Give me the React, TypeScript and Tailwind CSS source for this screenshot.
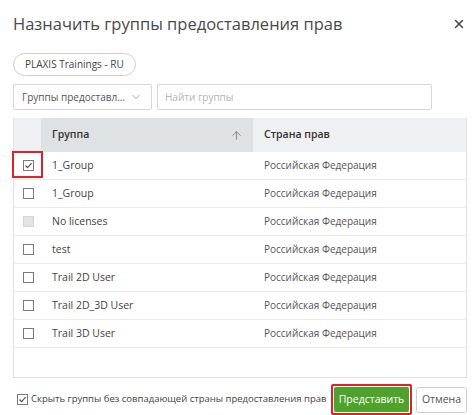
import { X, ChevronDown, ArrowUp } from "lucide-react";

const rows = [
  { name: "1_Group", country: "Российская Федерация", checked: true, disabled: false },
  { name: "1_Group", country: "Российская Федерация", checked: false, disabled: false },
  { name: "No licenses", country: "Российская Федерация", checked: false, disabled: true },
  { name: "test", country: "Российская Федерация", checked: false, disabled: false },
  { name: "Trail 2D User", country: "Российская Федерация", checked: false, disabled: false },
  { name: "Trail 2D_3D User", country: "Российская Федерация", checked: false, disabled: false },
  { name: "Trail 3D User", country: "Российская Федерация", checked: false, disabled: false },
];

function Box({ checked, disabled }: { checked?: boolean; disabled?: boolean }) {
  if (disabled) {
    return <span className="block w-[11px] h-[11px] border border-[#d4d4d4] bg-[#e4e4e4]" />;
  }
  return (
    <span className="flex items-center justify-center w-[11px] h-[11px] border border-[#7a7a7a] bg-white">
      {checked && (
        <svg width="9" height="9" viewBox="0 0 9 9">
          <path d="M1.5 4.5 L3.6 6.6 L7.6 2.2" fill="none" stroke="#555" strokeWidth="1.2" />
        </svg>
      )}
    </span>
  );
}

export default function App() {
  return (
    <div className="relative w-[474px] h-[415px] bg-white text-[#444] overflow-hidden whitespace-nowrap" style={{ fontFamily: "'Open Sans', 'Noto Sans', sans-serif" }}>
      <div className="flex items-center justify-between pl-[13px] pr-[8px] pt-[8px] h-[40px]">
        <h1 className="text-[16.5px] text-[#4a4a4a] leading-none">Назначить группы предоставления прав</h1>
        <X className="w-[14px] h-[14px] text-[#444]" strokeWidth={2.5} />
      </div>
      <div className="px-[13px] mt-[10px]">
        <span className="inline-flex items-center h-[23px] px-[11px] border border-[#cfcfcf] rounded-full text-[10px] text-[#444]">
          PLAXIS Trainings - RU
        </span>
      </div>
      <div className="flex gap-[5px] px-[13px] mt-[8px]">
        <div className="flex items-center justify-between w-[139px] h-[26px] border border-[#d6d6d6] rounded-[2px] pl-[8px] pr-[9px] text-[10px] text-[#555]">
          <span>Группы предоставл...</span>
          <ChevronDown className="w-[12px] h-[12px] text-[#aaa]" />
        </div>
        <div className="flex items-center w-[275px] h-[26px] border border-[#d6d6d6] rounded-[2px] px-[7px] text-[10px] text-[#b5b5b5]">
          Найти группы
        </div>
      </div>
      <div className="mx-[13px] mt-[8px] w-[454px] h-[260px] border border-[#e2e2e2] border-t-0 flex flex-col">
        <div className="flex h-[34px] bg-[#eef0f2]">
          <div className="w-[27px]" />
          <div className="w-[212px] bg-[#dfe2e4] flex items-center justify-between pl-[11px] pr-[10px]">
            <span className="text-[10.5px] font-semibold text-[#333]">Группа</span>
            <ArrowUp className="w-[13px] h-[13px] text-[#777]" strokeWidth={1.5} />
          </div>
          <div className="flex-1 flex items-center pl-[11px] text-[10.5px] font-semibold text-[#333]">Страна прав</div>
        </div>
        {rows.map((r, i) => (
          <div key={i} className="flex h-[28px] border-b border-[#ececec] items-center">
            <div className="w-[27px] flex justify-center pl-[2px]">
              <Box checked={r.checked} disabled={r.disabled} />
            </div>
            <div className="w-[212px] pl-[11px] text-[10.5px] text-[#444]">{r.name}</div>
            <div className="flex-1 pl-[11px] text-[10px] text-[#555]">{r.country}</div>
          </div>
        ))}
      </div>
      <div className="flex items-center justify-between pl-[17px] pr-[7px] mt-[6px]">
        <div className="flex items-center gap-[3px] text-[9.5px] text-[#444]">
          <Box checked />
          <span>Скрыть группы без совпадающей страны предоставления прав</span>
        </div>
        <div className="flex items-center gap-[4px]">
          <button className="w-[81px] h-[31px] p-[1px] border-2 border-[#e0202a] rounded-[2px] flex items-center">
            <span className="flex items-center justify-center w-full h-full bg-[#4fa22b] text-white text-[10.5px] rounded-[2px]">Представить</span>
          </button>
          <button className="w-[51px] h-[26px] border border-[#cfcfcf] rounded-[3px] text-[10.5px] text-[#555] bg-white">Отмена</button>
        </div>
      </div>
      <div className="absolute left-[12px] top-[151px] w-[31px] h-[27px] border-2 border-[#e0202a]" />
    </div>
  );
}
